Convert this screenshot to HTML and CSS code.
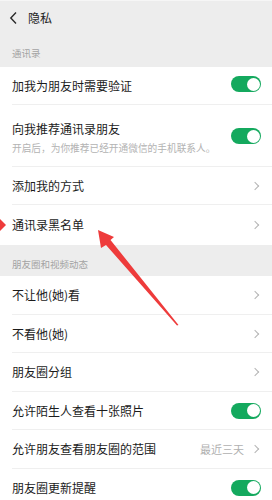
FILE: index.html
```html
<!doctype html>
<html>
<head>
	<meta charset="utf-8">
	<title>隐私</title>
	<link rel="stylesheet" href="styles.css">
</head>
<body>
	<div class="page">
		<div class="header">
			<svg class="back" width="10" height="14" viewBox="0 0 10 14"><polyline points="7,1.5 1.8,7 7,12.5" fill="none" stroke="#2a2a2a" stroke-width="1.4"/></svg>
			<span class="title">隐私</span>
		</div>

		<div class="section first">通讯录</div>
		<div class="row">
			<span class="label">加我为朋友时需要验证</span>
			<span class="switch up"></span>
		</div>
		<div class="row tall">
			<div class="texts">
				<span class="label">向我推荐通讯录朋友</span>
				<span class="sub">开启后，为你推荐已经开通微信的手机联系人。</span>
			</div>
			<span class="switch"></span>
		</div>
		<div class="row">
			<span class="label">添加我的方式</span>
			<span class="chev"></span>
		</div>
		<div class="row last">
			<span class="label">通讯录黑名单</span>
			<span class="chev"></span>
		</div>

		<div class="section">朋友圈和视频动态</div>
		<div class="row mid">
			<span class="label">不让他(她)看</span>
			<span class="chev"></span>
		</div>
		<div class="row mid">
			<span class="label">不看他(她)</span>
			<span class="chev"></span>
		</div>
		<div class="row mid">
			<span class="label">朋友圈分组</span>
			<span class="chev"></span>
		</div>
		<div class="row mid">
			<span class="label">允许陌生人查看十张照片</span>
			<span class="switch"></span>
		</div>
		<div class="row mid">
			<span class="label">允许朋友查看朋友圈的范围</span>
			<span class="value">最近三天</span>
			<span class="chev"></span>
		</div>
		<div class="row mid">
			<span class="label">朋友圈更新提醒</span>
			<span class="switch"></span>
		</div>

		<!-- annotation arrows drawn over the screenshot -->
		<svg class="marks" width="272" height="500" viewBox="0 0 272 500">
			<polygon points="0,219 6,225 0,231" fill="#ee3b3b"/>
			<polygon points="98,230 114,237 110.5,240 178.5,325 177,325.5 106,245 101,248" fill="#ee3b3b"/>
		</svg>
	</div>
</body>
</html>
```

FILE: styles.css
```css
* {
	box-sizing: border-box;
}

body {
	margin: 0;
	background-color: #ededed;
	font-family: "Noto Sans CJK SC", "Noto Sans", sans-serif;
	color: #1b1b1b;
}

.page {
	position: relative;
	width: 272px;
	height: 500px;
	overflow: hidden;
	background-color: #ededed;
}

.header {
	height: 34px;
	display: flex;
	align-items: center;
	padding-left: 9px;
	border-top: 1px solid #f6f6f6;
}

.back {
	display: block;
}

.title {
	margin-left: 9px;
	font-size: 12px;
	color: #1e1e1e;
}

.section {
	height: 31px;
	padding: 13px 0 0 12px;
	font-size: 9.5px;
	line-height: 12px;
	color: #a3a3a3;
}

.section.first {
	height: 33px;
	padding-top: 13px;
}

.row {
	position: relative;
	height: 38px;
	display: flex;
	align-items: center;
	padding: 0 13px 0 12px;
	background-color: #fff;
}

.row::after {
	content: "";
	position: absolute;
	left: 12px;
	right: 0;
	bottom: 0;
	height: 1px;
	background-color: #efefef;
}

.row.last::after {
	display: none;
}

.row.last {
	height: 40px;
}

.row.tall {
	height: 62px;
}

.row.mid {
	height: 38.5px;
}

.label {
	flex: 1;
	font-size: 12px;
	line-height: 16px;
	white-space: nowrap;
}

.texts {
	flex: 1;
	display: flex;
	flex-direction: column;
	gap: 5px;
	padding-top: 2px;
}

.sub {
	font-size: 9.7px;
	line-height: 12px;
	color: #b3b3b3;
	white-space: nowrap;
}

.value {
	font-size: 11px;
	color: #b0b0b0;
	margin-right: 8px;
}

.switch {
	position: relative;
	width: 30px;
	height: 16px;
	border-radius: 8px;
	background-color: #14a95e;
	margin-right: -2px;
	flex: none;
}

.switch::after {
	content: "";
	position: absolute;
	right: 1.5px;
	top: 1.5px;
	width: 13px;
	height: 13px;
	border-radius: 50%;
	background-color: #fff;
}

.switch.up {
	margin-top: -4px;
}

.chev {
	width: 6px;
	height: 6px;
	border-top: 1.2px solid #b4b4b4;
	border-right: 1.2px solid #b4b4b4;
	transform: rotate(45deg);
	margin-right: 1px;
	flex: none;
}

.marks {
	position: absolute;
	left: 0;
	top: 0;
	pointer-events: none;
}
```
